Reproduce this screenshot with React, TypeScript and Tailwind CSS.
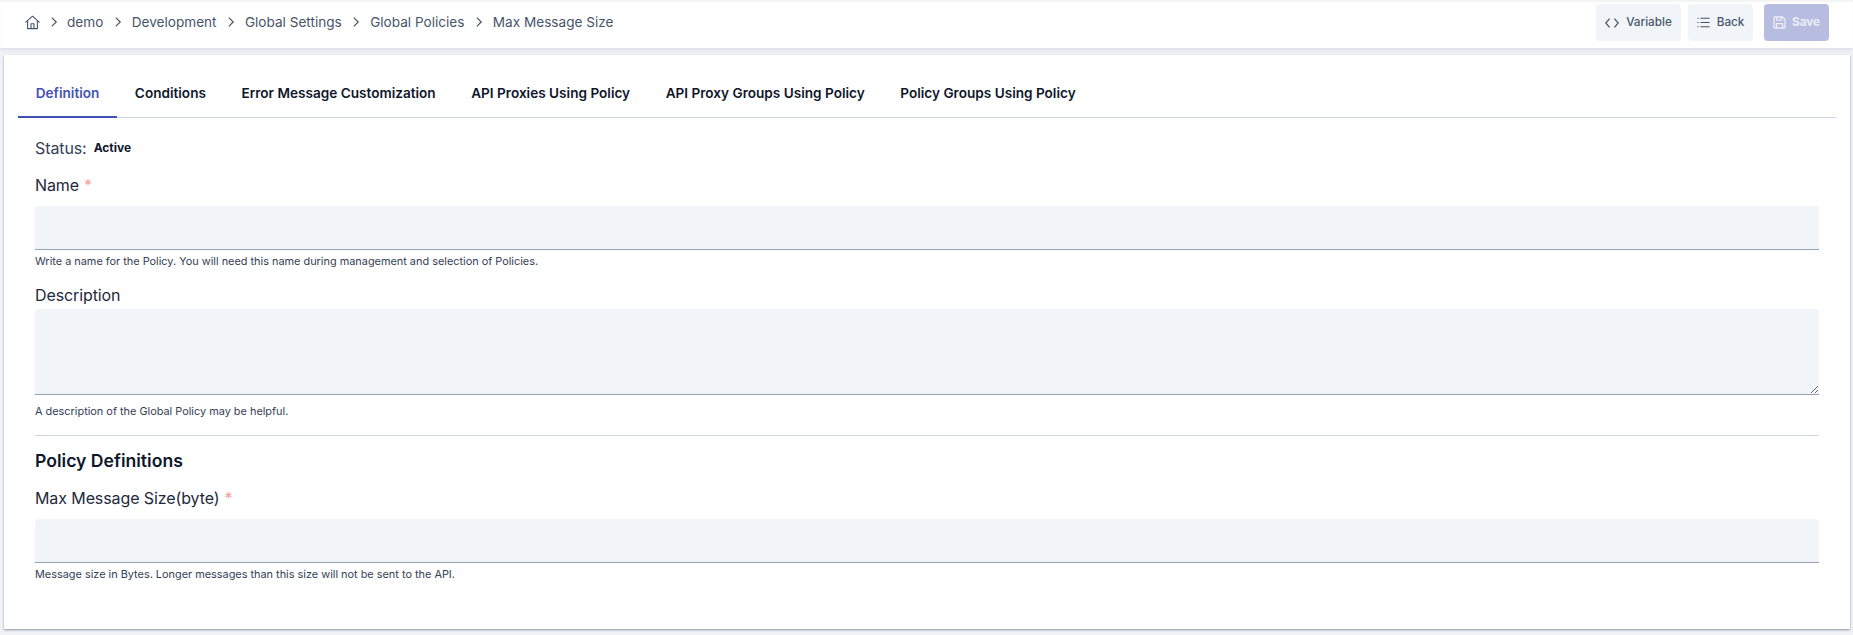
import React from "react";

function Chevron() {
  return (
    <svg width="14" height="14" viewBox="0 0 14 14" fill="none" stroke="#475569" strokeWidth="1.2" className="shrink-0">
      <path d="M4.8 2.6 L9.2 7 L4.8 11.4" />
    </svg>
  );
}

function Home() {
  return (
    <svg width="15" height="15" viewBox="0 0 15 15" fill="none" stroke="#475569" strokeWidth="1.1" className="shrink-0">
      <path d="M0.8 7.2 L7.5 1.2 L14.2 7.2" strokeLinejoin="round" strokeLinecap="round" />
      <path d="M2.6 6 V13.6 H12.4 V6" strokeLinejoin="round" />
      <path d="M6 13.6 V8.8 H9 V13.6" strokeLinejoin="round" />
    </svg>
  );
}

const crumbs = ["demo", "Development", "Global Settings", "Global Policies", "Max Message Size"];
const tabs = [
  "Definition",
  "Conditions",
  "Error Message Customization",
  "API Proxies Using Policy",
  "API Proxy Groups Using Policy",
  "Policy Groups Using Policy",
];

function Req() {
  return <span className="ml-[5px] text-[#f59e9e]">*</span>;
}

function Label({ children, required }: { children: React.ReactNode; required?: boolean }) {
  return (
    <div className="text-[16px] leading-[20px] text-[#1e293b] tracking-[-0.1px]">
      {children}
      {required && <Req />}
    </div>
  );
}

function Hint({ children }: { children: React.ReactNode }) {
  return <div className="text-[10.9px] leading-[14px] text-[#334155]">{children}</div>;
}

export default function App() {
  return (
    <div
      className="min-h-[635px] h-[635px] overflow-hidden bg-[#eff3f8]"
      style={{ fontFamily: "Inter, 'Liberation Sans', sans-serif" }}
    >
      <header className="relative flex h-12 items-center justify-between bg-white pb-[3px] pl-[25px] pr-[24px] shadow-[0_2px_4px_rgba(100,116,139,0.15),inset_0_2px_2px_rgba(0,0,0,0.05)]">
        <nav className="flex items-center text-[13.6px] text-[#475569]">
          <Home />
          <span className="ml-[7px] mr-[6px]"><Chevron /></span>
          {crumbs.map((c, i) => (
            <React.Fragment key={c}>
              <span>{c}</span>
              {i < crumbs.length - 1 && (
                <span className="mx-[7.2px]"><Chevron /></span>
              )}
            </React.Fragment>
          ))}
        </nav>
        <div className="flex items-center text-[11.7px] font-medium">
          <button className="flex h-[37px] w-[85px] items-center justify-center gap-[7px] rounded-[4px] bg-[#f1f5f9] text-[#475569]">
            <svg width="14" height="14" viewBox="0 0 14 14" fill="none" stroke="#475569" strokeWidth="1.2">
              <path d="M4.6 2.6 L0.8 7 L4.6 11.4" />
              <path d="M9.4 2.6 L13.2 7 L9.4 11.4" />
            </svg>
            Variable
          </button>
          <button className="ml-[7px] flex h-[37px] w-[65px] items-center justify-center gap-[7px] rounded-[4px] bg-[#f1f5f9] text-[#475569]">
            <svg width="13" height="13" viewBox="0 0 13 13" fill="none" stroke="#475569" strokeWidth="1.1">
              <path d="M3.4 2.2 H12.6 M3.4 6.5 H12.6 M3.4 10.8 H12.6" />
              <path d="M0.4 2.2 H1.6 M0.4 6.5 H1.6 M0.4 10.8 H1.6" />
            </svg>
            Back
          </button>
          <button className="ml-[11px] flex h-[37px] w-[65px] items-center justify-center gap-[6px] rounded-[4px] bg-[#b7bde0] font-bold text-[#eceef8]">
            <svg width="13" height="13" viewBox="0 0 13 13" fill="none" stroke="#eceef8" strokeWidth="1.3">
              <path d="M1 2 A1 1 0 0 1 2 1 H9.5 L12 3.5 V11 A1 1 0 0 1 11 12 H2 A1 1 0 0 1 1 11 Z" strokeLinejoin="round" />
              <path d="M3.6 1 V4.2 H8.6 V1" />
              <path d="M3.4 12 V7.6 H9.6 V12" />
            </svg>
            Save
          </button>
        </div>
      </header>

      <main className="ml-[4px] mr-[3px] mt-[7px] h-[574px] bg-white px-[14px] pt-[15px] shadow-[0_1px_2px_rgba(71,85,105,0.6)]">
        <div className="flex h-[48px] gap-0 border-b border-[#cbd5e1]">
          {tabs.map((t, i) => (
            <div
              key={t}
              className={
                i === 0
                  ? "mb-[-1px] flex h-[48px] items-start border-b-2 border-[#3f51b5] px-[17.75px] pt-[15px] text-[13.6px] leading-[17px] font-semibold text-[#4452b4]"
                  : "flex h-[47px] items-start px-[17.75px] pt-[15px] text-[13.6px] leading-[17px] font-semibold text-[#0f172a]"
              }
            >
              {t}
            </div>
          ))}
        </div>

        <div className="px-[17px]">
          <div className="mt-[20px] flex h-[20px] items-center">
            <span className="text-[16px] text-[#334155] tracking-[-0.1px]">Status:</span>
            <span className="ml-[7px] text-[12px] font-bold text-[#0f172a]">Active</span>
          </div>

          <div className="mt-[17px]">
            <Label required>Name</Label>
          </div>
          <input className="mt-[11px] block h-[44px] w-full rounded-t-[4px] border-b border-[#94a3b8] bg-[#f1f5f9] outline-none" />
          <div className="mt-[4px]"><Hint>Write a name for the Policy. You will need this name during management and selection of Policies.</Hint></div>

          <div className="mt-[17px]">
            <Label>Description</Label>
          </div>
          <textarea className="mt-[4px] block h-[86px] w-full rounded-t-[4px] border-b border-[#94a3b8] bg-[#f1f5f9] outline-none" />
          <div className="mt-[9px]"><Hint>A description of the Global Policy may be helpful.</Hint></div>

          <div className="mt-[17px] border-t border-[#d1d6de]" />

          <h2 className="mt-[13px] text-[17.6px] font-semibold leading-[24px] text-[#0f172a]">Policy Definitions</h2>

          <div className="mt-[15px]">
            <Label required>Max Message Size(byte)</Label>
          </div>
          <input className="mt-[11px] block h-[44px] w-full rounded-t-[4px] border-b border-[#94a3b8] bg-[#f1f5f9] outline-none" />
          <div className="mt-[4px]"><Hint>Message size in Bytes. Longer messages than this size will not be sent to the API.</Hint></div>
        </div>
      </main>
    </div>
  );
}
